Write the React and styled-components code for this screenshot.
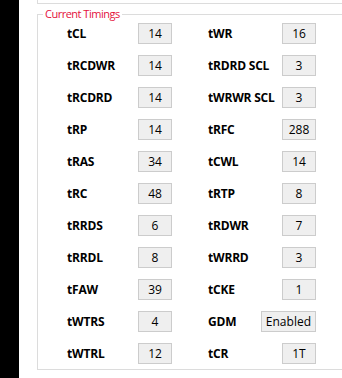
import styled, { createGlobalStyle } from 'styled-components';

const GlobalStyle = createGlobalStyle`
    html, body {
        margin: 0;
        padding: 0;
        background: #ffffff;
        overflow: hidden;
    }
    body {
        font-family: "Open Sans", "Noto Sans", "Liberation Sans", sans-serif;
    }
`;

const timings = [
    ['tCL', '14', 'tWR', '16'],
    ['tRCDWR', '14', 'tRDRD SCL', '3'],
    ['tRCDRD', '14', 'tWRWR SCL', '3'],
    ['tRP', '14', 'tRFC', '288'],
    ['tRAS', '34', 'tCWL', '14'],
    ['tRC', '48', 'tRTP', '8'],
    ['tRRDS', '6', 'tRDWR', '7'],
    ['tRRDL', '8', 'tWRRD', '3'],
    ['tFAW', '39', 'tCKE', '1'],
    ['tWTRS', '4', 'GDM', 'Enabled'],
    ['tWTRL', '12', 'tCR', '1T'],
];

const Page = styled.div`
    display: flex;
    width: 342px;
    height: 378px;
    overflow: hidden;
`;

// 左側黑色邊條
const SideStrip = styled.div`
    flex: none;
    width: 19px;
    background: #000000;
`;

const Content = styled.div`
    flex: 1;
    min-width: 0;
    display: flex;
    flex-direction: column;
    padding-left: 18px;
`;

// 上一個群組框的底邊 (右邊超出畫面)
const PrevGroupTail = styled.div`
    height: 3px;
    border-left: 1px solid #dcdcdc;
    border-bottom: 1px solid #dcdcdc;
`;

const GroupBox = styled.fieldset`
    margin: 2px 0 0 0;
    padding: 0 0 4px 0;
    height: 364px;
    box-sizing: border-box;
    border: 1px solid #dcdcdc;
    border-right: none;
    min-width: 0;
`;

const Title = styled.legend`
    margin-left: 5px;
    padding: 0 2px;
    font-size: 11px;
    line-height: 16px;
    letter-spacing: -0.5px;
    color: #e4103c;
`;

const Grid = styled.div`
    display: grid;
    grid-template-columns: 105px 108px;
    column-gap: 36px;
    row-gap: 11px;
    padding: 1px 0 0 29px;
`;

const Cell = styled.div`
    display: flex;
    align-items: center;
    justify-content: space-between;
`;

const Label = styled.span`
    font-size: 12px;
    font-weight: 700;
    color: #000000;
    white-space: nowrap;
    letter-spacing: -0.2px;
`;

const Value = styled.span`
    box-sizing: border-box;
    min-width: 34px;
    height: 21px;
    padding: 0 4px;
    display: flex;
    align-items: center;
    justify-content: center;
    border: 1px solid #cccccc;
    background: #efefef;
    font-size: 12px;
    color: #000000;
    white-space: nowrap;
`;

const App = () => {
    return (
        <Page>
            <GlobalStyle />
            <SideStrip />
            <Content>
                <PrevGroupTail />
                <GroupBox>
                    <Title>Current Timings</Title>
                    <Grid>
                        {timings.map(([l1, v1, l2, v2]) => [
                            <Cell key={l1}>
                                <Label>{l1}</Label>
                                <Value>{v1}</Value>
                            </Cell>,
                            <Cell key={l2}>
                                <Label>{l2}</Label>
                                <Value>{v2}</Value>
                            </Cell>,
                        ])}
                    </Grid>
                </GroupBox>
            </Content>
        </Page>
    );
};

export default App;
